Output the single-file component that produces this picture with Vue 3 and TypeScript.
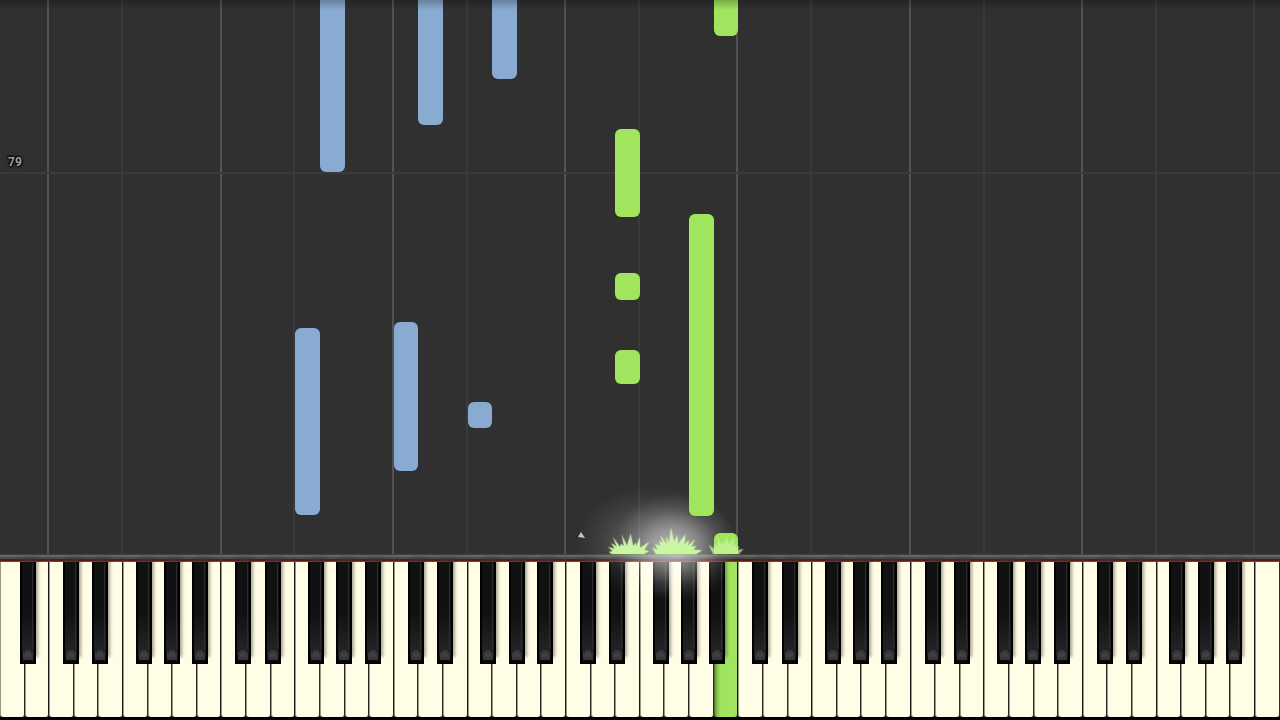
<script setup lang="ts">
interface Note {
  lane: number
  bottom: number
  height: number
  hand: 'left' | 'right'
}

const whiteCount = 52
const activeKey = 29
const laneWidth = 100 / whiteCount

const notes: Note[] = [
  { lane: 13, bottom: 382, height: 220, hand: 'left' },
  { lane: 17, bottom: 429, height: 180, hand: 'left' },
  { lane: 20, bottom: 475, height: 140, hand: 'left' },
  { lane: 12, bottom: 39, height: 187, hand: 'left' },
  { lane: 16, bottom: 83, height: 149, hand: 'left' },
  { lane: 19, bottom: 126, height: 26, hand: 'left' },
  { lane: 29, bottom: 518, height: 80, hand: 'right' },
  { lane: 25, bottom: 337, height: 88, hand: 'right' },
  { lane: 25, bottom: 254, height: 27, hand: 'right' },
  { lane: 25, bottom: 170, height: 34, hand: 'right' },
  { lane: 28, bottom: 38, height: 302, hand: 'right' },
  { lane: 29, bottom: -6, height: 27, hand: 'right' },
]

const octaveStarts = [2, 9, 16, 23, 30, 37, 44]
const lines = [
  ...octaveStarts.map((i) => ({ lane: i, strong: true })),
  ...octaveStarts.map((i) => ({ lane: i + 3, strong: false })),
  { lane: 51, strong: false },
]

// Left edges of the five black keys, in white-key widths from each C.
const blackOffsets = [0.56, 1.75, 3.51, 4.66, 5.81]
const blackKeys = [0.81, ...octaveStarts.flatMap((c) => blackOffsets.map((o) => c + o))]

const pct = (lane: number): string => `${lane * laneWidth}%`

const isBoundary = (key: number): boolean => lines.some((l) => l.lane === key)

const sparks = [
  {
    lane: 24.7,
    width: 42,
    path: 'M4 28L1 26l4-1-5-4 7 2L3 17l6 4L4.700 10.700 12 21l1-3 3 2-2.300-11.700L19 20l3.700-12.700L25 20l3-3v4l4-9.700L32 22l9.300-6.300L36 24l5 1-5 3z',
  },
  {
    lane: 26.45,
    width: 52,
    path: 'M5 28L1.300 21.700 7 24l-3-6 6 2-2-5 4 2L9 9l7 10-1-9 3 7 2-15.700L23 16l3.300-7L27 18l7.700-9.700L33 19l5-5-1 6 7-6.700L40 21l5-1-3 4 9 .3-6 3.700z',
  },
  {
    lane: 28.75,
    width: 36,
    path: 'M5 28L.6 19 7 23l-1-5 4 3L9 9l5 11 1-5 2 3 1-8 3 9 4.600-8.300L25 21l3-3v4l3-2-1 4 5.600-1L31 28z',
  },
]
</script>

<template>
  <main class="stage">
    <section class="roll" aria-label="Falling notes">
      <i v-for="l in lines" :key="l.lane" class="line" :class="{ strong: l.strong }" :style="{ left: pct(l.lane) }"></i>
      <div class="measure"><span>79</span></div>
      <i v-for="(n, i) in notes" :key="i" class="note" :class="n.hand"
        :style="{ left: pct(n.lane), width: pct(1), bottom: n.bottom + 'px', height: n.height + 'px' }"></i>
      <div class="shade"></div>
    </section>
    <div class="rail"></div>
    <section class="piano" aria-label="Piano keyboard">
      <div class="whites">
        <button v-for="k in whiteCount" :key="k" type="button" class="white"
          :class="{ active: k - 1 === activeKey, boundary: isBoundary(k) }" :aria-label="'White key ' + k"></button>
      </div>
      <button v-for="(b, i) in blackKeys" :key="i" type="button" class="black" :style="{ left: pct(b) }"
        :aria-label="'Black key ' + (i + 1)">
        <svg viewBox="0 0 16 102" preserveAspectRatio="none" aria-hidden="true">
          <path d="M3 90h2v-2h6v2h2v8H3z" fill="#353537" />
          <path d="M5 92l3-2 3 2v3H5z" fill="#414143" />
          <path d="M12.500 1v86" stroke="#2c2c2f" />
        </svg>
      </button>
      <div class="glow wide"></div>
      <div class="glow core"></div>
      <svg v-for="s in sparks" :key="s.lane" class="spark" :style="{ left: pct(s.lane), width: s.width + 'px' }"
        :viewBox="`0 0 ${s.width} 30`" aria-hidden="true">
        <defs>
          <linearGradient :id="'spark' + s.width" x1="0" y1="0" x2="0" y2="1">
            <stop offset="0" stop-color="#d2efb8" stop-opacity=".7" />
            <stop offset=".5" stop-color="#cdf3ab" />
            <stop offset="1" stop-color="#c6fa97" />
          </linearGradient>
        </defs>
        <path :d="s.path" :fill="`url(#spark${s.width})`" :opacity="s.width === 36 ? 0.6 : 1" />
      </svg>
      <svg class="fleck" viewBox="0 0 7 7" aria-hidden="true"><path d="M3 0l2 3 2 3-7-1z" fill="#c4c4c4" /></svg>
    </section>
  </main>
</template>

<style>
body {
  margin: 0;
  background: #000;
}
</style>

<style scoped>
.stage {
  display: flex;
  flex-direction: column;
  min-height: 100vh;
  overflow: hidden;
  background: #000;
  font-family: Roboto, "Liberation Sans", sans-serif;
}
.roll {
  position: relative;
  flex: 1;
  min-height: 300px;
  overflow: hidden;
  background: #303030;
}
.line {
  position: absolute;
  top: 0;
  bottom: 0;
  width: 2px;
  margin-left: -2px;
  background: #3a3a3a;
}
.line.strong {
  background: #535353;
}
.measure {
  position: absolute;
  left: 0;
  right: 0;
  bottom: 380px;
  height: 2px;
  background: #3a3a3a;
}
.measure span {
  position: absolute;
  left: 8px;
  bottom: 5px;
  color: #a0a0a0;
  font-size: 12px;
  font-weight: 700;
  line-height: 14px;
  text-shadow: 0 0 2px #000, 0 0 2px #000, 1px 1px 2px #000, -1px -1px 2px #000;
}
.note {
  position: absolute;
  z-index: 2;
  box-sizing: border-box;
  border-radius: 6px;
}
.note.left {
  background: #89abd1;
  box-shadow: 0 0 1px #26384d;
}
.note.right {
  background: #a1e55e;
  box-shadow: 0 0 1px #2f4d18;
}
.shade {
  position: absolute;
  z-index: 3;
  left: 0;
  right: 0;
  top: 0;
  height: 10px;
  background: linear-gradient(rgba(0, 0, 0, .25), rgba(0, 0, 0, 0));
}
.rail {
  height: 8px;
  background: linear-gradient(#424242 0 1px, #636363 1px 3px, #4a4a4a 3px 5px, #332b2b 5px 6px, #5c1c1a 6px 7px, #96302c 7px);
}
.piano {
  position: relative;
  height: 158px;
  background: #000;
}
.whites {
  display: flex;
  height: 155px;
  background: #222218;
}
.white {
  flex: 1;
  min-width: 0;
  padding: 0;
  border: 0;
  border-right: 1px solid #2c2b25;
  border-left: 1px solid #9b9984;
  border-radius: 0 0 3px 3px;
  background: #fffde6;
}
.white.boundary {
  border-right-color: #191917;
}
.white.active {
  border-left-color: #4f6e31;
  background: linear-gradient(90deg, #6c9c40, #8ccb50 3px, #a1e55e 6px);
}
.black {
  position: absolute;
  top: 0;
  width: 16px;
  height: 102px;
  padding: 0;
  border: 0;
  background: linear-gradient(90deg, #000 2px, transparent 2px 14px, #000 14px), linear-gradient(#111 0 50%, #232325 85%, #0a0a0a 97%, #000);
  box-shadow: 3px -6px 3px -1px rgba(60, 50, 40, .45);
}
.black svg {
  display: block;
  width: 100%;
  height: 100%;
}
.glow {
  position: absolute;
  z-index: 1;
  pointer-events: none;
}
.glow.wide {
  left: 45%;
  top: -76px;
  width: 160px;
  height: 112px;
  background: radial-gradient(closest-side, rgba(255, 255, 255, .3), rgba(255, 255, 255, .2) 35%, rgba(255, 255, 255, .07) 70%, rgba(255, 255, 255, 0));
}
.glow.core {
  left: 48%;
  top: -68px;
  width: 124px;
  height: 108px;
  background: radial-gradient(closest-side, rgba(255, 255, 255, .5), rgba(255, 255, 255, .34) 35%, rgba(255, 255, 255, .1) 70%, rgba(255, 255, 255, 0));
}
.spark {
  position: absolute;
  z-index: 4;
  top: -36px;
  height: 30px;
  filter: drop-shadow(0 0 1px rgba(200, 255, 150, .5));
}
.fleck {
  position: absolute;
  left: 45%;
  top: -30px;
  width: 7px;
  height: 7px;
  margin-left: 2px;
}
</style>
